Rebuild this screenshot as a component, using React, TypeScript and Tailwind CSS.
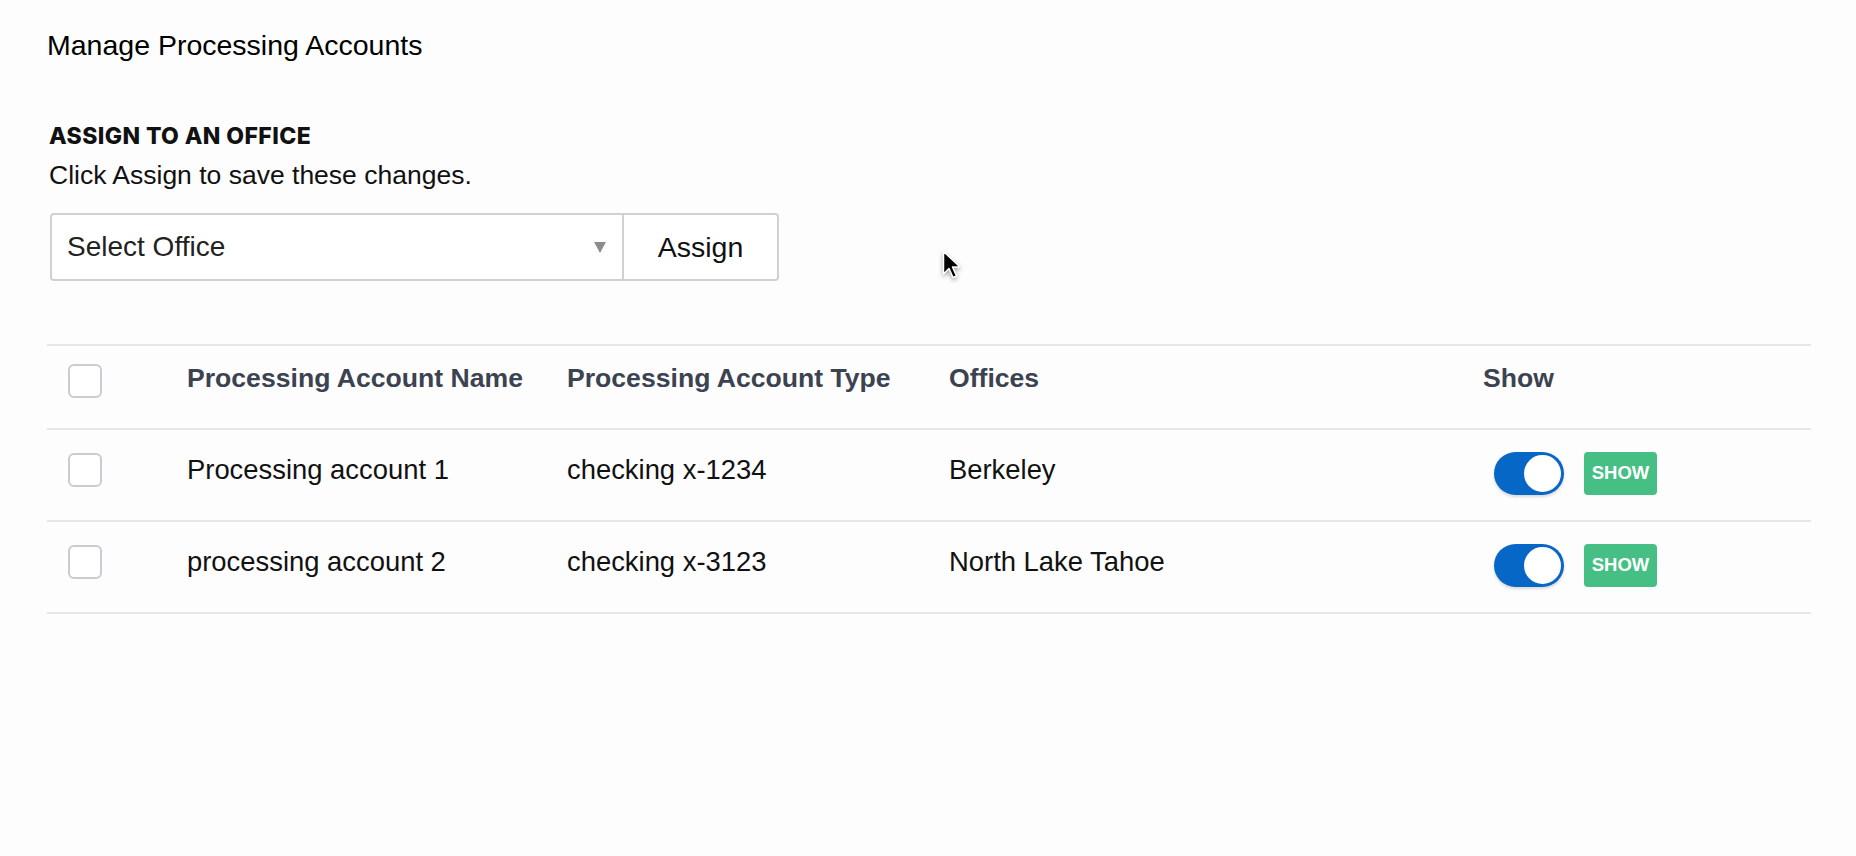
import React from 'react'

const ROWS = [
  { name: 'Processing account 1', type: 'checking x-1234', office: 'Berkeley' },
  { name: 'processing account 2', type: 'checking x-3123', office: 'North Lake Tahoe' },
]

const COLS = 'grid grid-cols-[140px_380px_382px_534px_1fr] items-center'

function Checkbox({ shift }: { shift: string }) {
  return <div className={`ml-[21px] w-[34px] h-[34px] rounded-[6px] border-2 border-[#cbcbd0] bg-white ${shift}`} />
}

function Toggle() {
  return (
    <div className="w-[70px] h-[43px] rounded-full bg-[#0767c6] flex items-center justify-end pr-px shadow-[0_2px_3px_rgba(0,0,0,0.15)]">
      <div className="w-[41px] h-[41px] rounded-full bg-white border-2 border-[#0767c6]" />
    </div>
  )
}

export default function App() {
  return (
    <div className="relative min-h-screen bg-[#fdfdfd] text-black font-['Liberation_Sans',Arial,sans-serif] pl-[47px] pr-[45px] pt-[29px]">
      <h1 className="text-[28.5px] leading-[32px]">Manage Processing Accounts</h1>

      <div className="pl-[2px]">
        <h2 className="mt-[61px] font-['Inter',sans-serif] font-extrabold text-[23px] tracking-[0.4px] leading-[28px] text-[#111]">
          ASSIGN TO AN OFFICE
        </h2>
        <p className="mt-[9px] text-[26.5px] leading-[32px] text-[#111]">Click Assign to save these changes.</p>

        {/* office picker */}
        <div className="mt-[22px] ml-px flex h-[68px] w-[729px] rounded-[4px] border-2 border-[#d0d0d5] bg-white">
          <div className="flex w-[572px] items-center justify-between pl-[15px] pr-[16px] border-r-2 border-[#d0d0d5]">
            <span className="text-[28px] text-[#222]">Select Office</span>
            <svg width="12" height="11" viewBox="0 0 12 11">
              <path d="M0 0 H12 L6 11 Z" fill="#8c8c8c" />
            </svg>
          </div>
          <div className="flex flex-1 items-center justify-center text-[28.5px] text-[#111]">Assign</div>
        </div>
      </div>

      {/* table */}
      <div className="mt-[63px] border-t-2 border-[#e6e6e6]">
        <div className={`${COLS} h-[84px] border-b-2 border-[#e6e6e6] font-bold text-[26.6px] text-[#3b4351]`}>
          <Checkbox shift="-mt-[12px]" />
          <div className="-mt-[16px]">Processing Account Name</div>
          <div className="-mt-[16px]">Processing Account Type</div>
          <div className="-mt-[16px]">Offices</div>
          <div className="-mt-[16px]">Show</div>
        </div>
        {ROWS.map(r => (
          <div key={r.name} className={`${COLS} h-[92px] border-b-2 border-[#e6e6e6] text-[27.4px] text-[#111]`}>
            <Checkbox shift="-mt-[10px]" />
            <div className="-mt-[10px]">{r.name}</div>
            <div className="-mt-[10px]">{r.type}</div>
            <div className="-mt-[10px]">{r.office}</div>
            <div className="flex items-center gap-[20px] pl-[11px] -mt-[4px]">
              <Toggle />
              <div className="w-[73px] h-[43px] rounded-[4px] bg-[#45bf84] flex items-center justify-center text-white font-bold text-[18.5px]">
                SHOW
              </div>
            </div>
          </div>
        ))}
      </div>

      {/* mouse pointer */}
      <svg className="absolute left-[942px] top-[250px] drop-shadow-[0_2px_2px_rgba(0,0,0,0.35)]" width="20" height="30" viewBox="0 0 20 30">
        <path d="M1.5 1.5 V24 L7 18.5 L11 27.5 L14.5 26 L10.5 17 H18 Z" fill="#000" stroke="#fff" strokeWidth="1.5" strokeLinejoin="round" />
      </svg>
    </div>
  )
}
